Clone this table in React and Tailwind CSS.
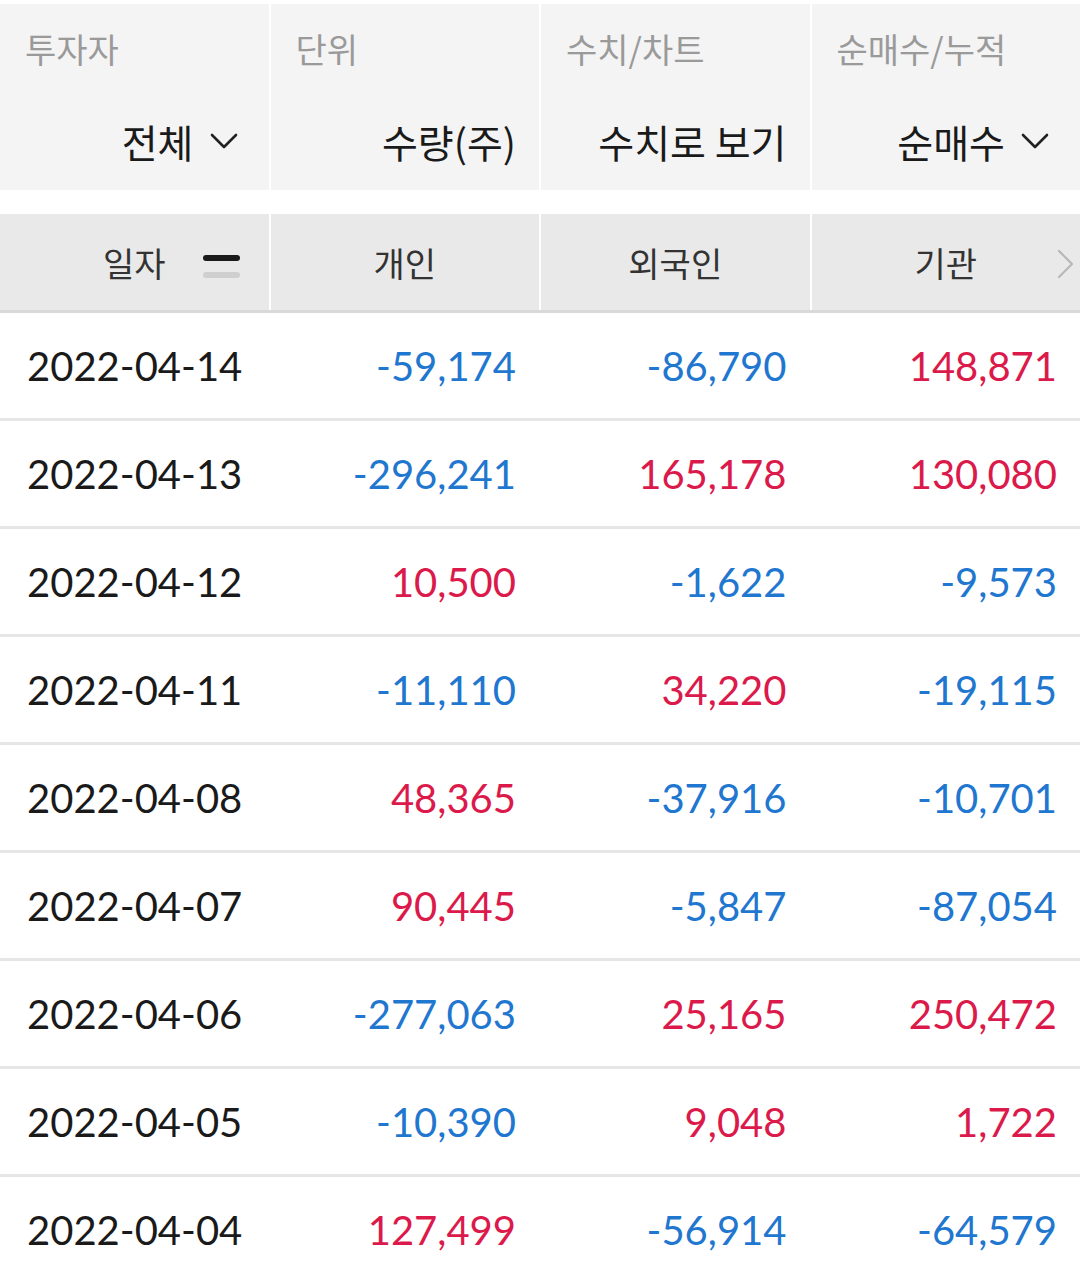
const rows = [
  ['2022-04-14', '-59,174', '-86,790', '148,871'],
  ['2022-04-13', '-296,241', '165,178', '130,080'],
  ['2022-04-12', '10,500', '-1,622', '-9,573'],
  ['2022-04-11', '-11,110', '34,220', '-19,115'],
  ['2022-04-08', '48,365', '-37,916', '-10,701'],
  ['2022-04-07', '90,445', '-5,847', '-87,054'],
  ['2022-04-06', '-277,063', '25,165', '250,472'],
  ['2022-04-05', '-10,390', '9,048', '1,722'],
  ['2022-04-04', '127,499', '-56,914', '-64,579'],
];

const kr = { fontFamily: '"Noto Sans CJK KR", "Noto Sans", sans-serif' };
const num = { fontFamily: 'Lato, "Noto Sans", sans-serif' };

function Caret() {
  return (
    <svg width="28" height="18" viewBox="0 0 28 18" className="ml-[16px] mr-[8px]">
      <polyline points="2,3 14,15 26,3" fill="none" stroke="#222" strokeWidth="2.6" strokeLinecap="round" strokeLinejoin="round" />
    </svg>
  );
}

function Num({ value }) {
  const neg = value.startsWith('-');
  return (
    <div
      className={`flex items-center justify-end pr-[23px] text-[40px] ${neg ? 'text-[#1f77d0]' : 'text-[#db1a4b]'}`}
      style={num}
    >
      {value}
    </div>
  );
}

function Filter({ label, value, chevron }) {
  return (
    <div className="flex flex-col bg-[#f4f4f4] pl-[25px] pr-[23px]">
      <div className="h-[88px] flex items-center text-[34px] text-[#9a9a9a]">{label}</div>
      <div className="h-[98px] flex items-center justify-end text-[39px] text-[#1a1a1a]">
        <span>{value}</span>
        {chevron && <Caret />}
      </div>
    </div>
  );
}

export default function App() {
  return (
    <div className="w-[1080px] h-[1276px] overflow-hidden bg-white" style={kr}>
      <div className="pt-[4px] grid grid-cols-4 gap-[2px]">
        <Filter label="투자자" value="전체" chevron />
        <Filter label="단위" value="수량(주)" />
        <Filter label="수치/차트" value="수치로 보기" />
        <Filter label="순매수/누적" value="순매수" chevron />
      </div>

      <div className="mt-[24px] grid grid-cols-4 gap-[2px] border-b-[3px] border-[#d9d9d9]">
        <div className="relative h-[96px] bg-[#e9e9e9] flex items-center justify-center text-[34px] text-[#333]">
          <span>일자</span>
          <div className="absolute right-[29px] top-[41px] flex flex-col gap-[11px]">
            <div className="w-[37px] h-[6px] rounded-full bg-[#1a1a1a]" />
            <div className="w-[37px] h-[6px] rounded-full bg-[#cfcfcf]" />
          </div>
        </div>
        <div className="h-[96px] bg-[#e9e9e9] flex items-center justify-center text-[34px] text-[#333]">개인</div>
        <div className="h-[96px] bg-[#e9e9e9] flex items-center justify-center text-[34px] text-[#333]">외국인</div>
        <div className="relative h-[96px] bg-[#e9e9e9] flex items-center justify-center text-[34px] text-[#333]">
          <span>기관</span>
          <svg width="20" height="32" viewBox="0 0 20 32" className="absolute right-[4px] top-[34px]">
            <polyline points="3,3 16,16 3,29" fill="none" stroke="#b8b8b8" strokeWidth="2.2" strokeLinecap="round" strokeLinejoin="round" />
          </svg>
        </div>
      </div>

      {rows.map((r) => (
        <div key={r[0]} className="grid grid-cols-4 gap-[2px] h-[108px] border-b-[3px] border-[#e6e6e6]">
          <div className="flex items-center pl-[27px] text-[40px] text-[#1a1a1a]" style={num}>{r[0]}</div>
          <Num value={r[1]} />
          <Num value={r[2]} />
          <Num value={r[3]} />
        </div>
      ))}
    </div>
  );
}
